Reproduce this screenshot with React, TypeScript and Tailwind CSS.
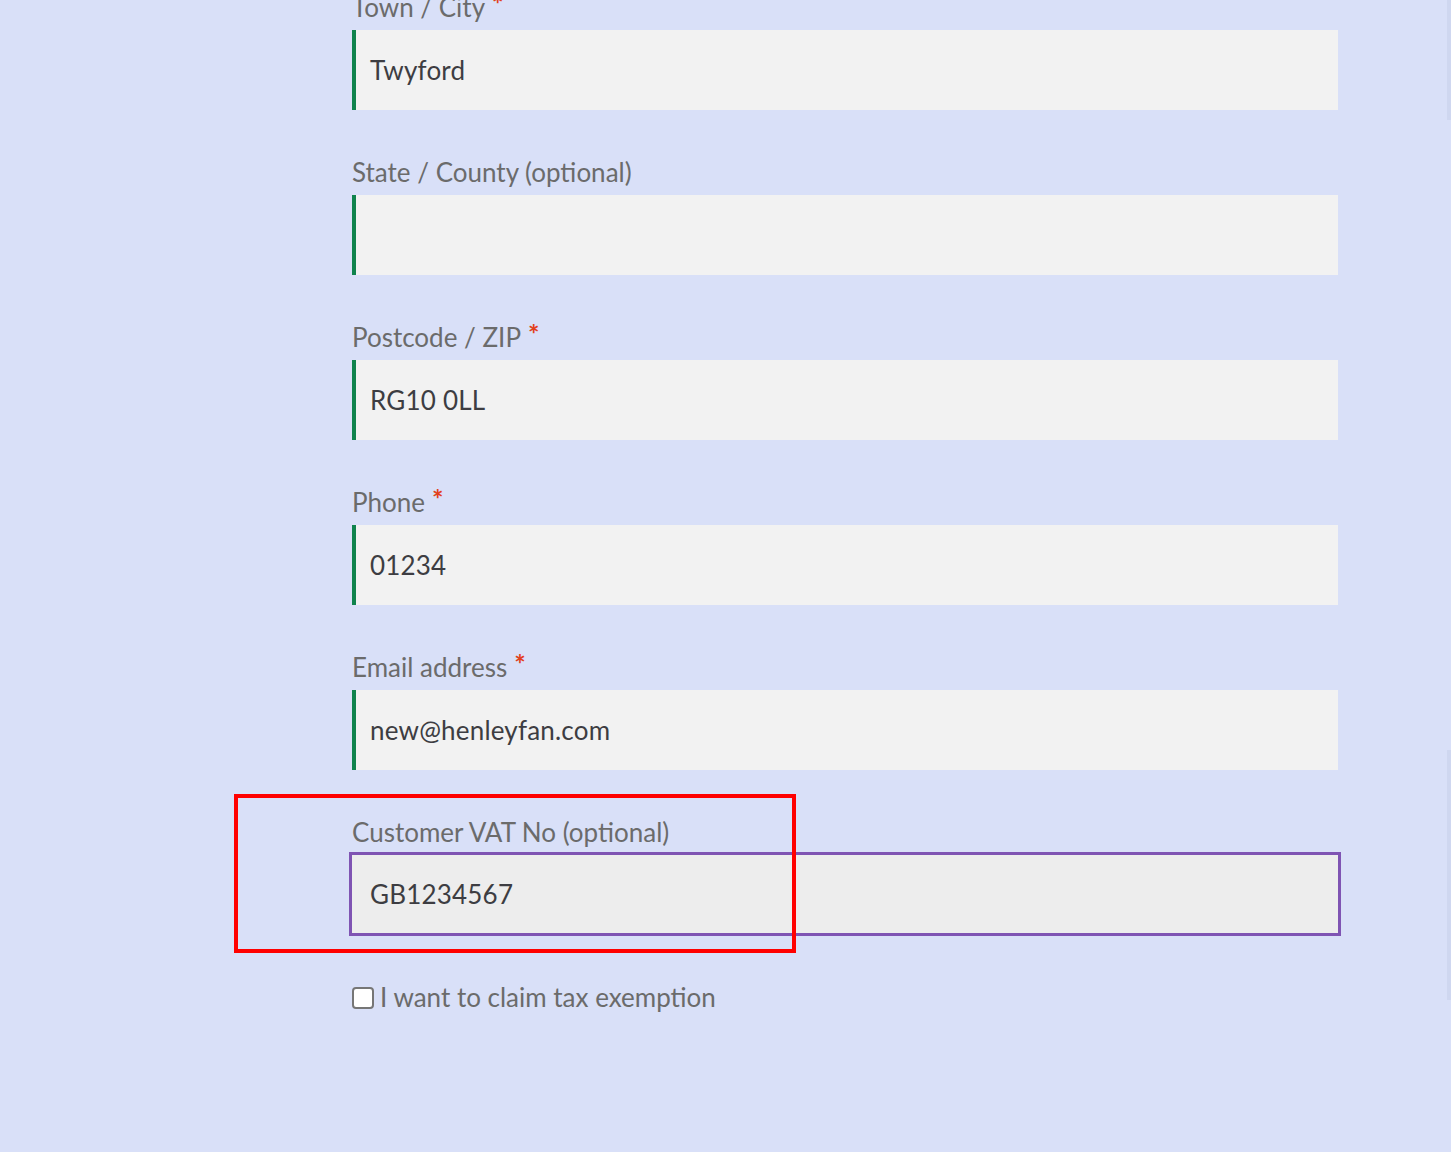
import React from 'react';

const FIELDS = [
  { label: 'Town / City', required: true, value: 'Twyford' },
  { label: 'State / County (optional)', required: false, value: '' },
  { label: 'Postcode / ZIP', required: true, value: 'RG10 0LL' },
  { label: 'Phone', required: true, value: '01234' },
  { label: 'Email address', required: true, value: 'new@henleyfan.com' },
];

const Field = ({ label, required, value }: { label: string; required: boolean; value: string }) => (
  <div className="flex flex-col mb-[42px]">
    <label className="h-[40px] leading-[40px] text-[26px] text-[#6b6b6b]">
      {label}
      {required && <span className="text-[#e2401c] ml-[7px] relative -top-[3px] text-[27px] font-bold">*</span>}
    </label>
    <div className="mt-[3px] h-[80px] bg-[#f2f2f2] border-l-4 border-[#0f834d] flex items-center pl-[14px] text-[26px] tracking-[0.2px] text-[#3d3d42]">
      {value}
    </div>
  </div>
);

export default function App() {
  return (
    <div
      className="relative w-full h-[1152px] overflow-hidden bg-[#d9e0f8]"
      style={{ fontFamily: 'Lato, "Open Sans", sans-serif' }}
    >
      {/* faint scrollbar edge */}
      <div className="absolute right-0 top-0 w-[4px] h-[120px] bg-[#cfd7f0]" />
      <div className="absolute right-0 top-[750px] w-[4px] h-[250px] bg-[#cfd7f0]" />

      <div className="ml-[352px] w-[986px] -mt-[13px] flex flex-col">
        {FIELDS.map(f => (
          <Field key={f.label} {...f} />
        ))}

        <div className="relative flex flex-col">
          <div className="absolute -left-[118px] -top-[18px] w-[562px] h-[159px] border-4 border-[#ff0000] z-10" />
          <label className="h-[40px] leading-[40px] text-[26px] text-[#6b6b6b]">Customer VAT No (optional)</label>
          <div className="-ml-[3px] w-[992px] h-[84px] bg-[#ededed] border-[3px] border-[#7f54b3] flex items-center pl-[18px] text-[26px] tracking-[0.2px] text-[#3d3d42]">
            GB1234567
          </div>
        </div>

        <label className="mt-[42px] flex items-center gap-[6px] text-[26px] text-[#6b6b6b]">
          <span className="w-[22px] h-[22px] rounded-[4px] border-2 border-[#767676] bg-white" />
          I want to claim tax exemption
        </label>
      </div>
    </div>
  );
}
